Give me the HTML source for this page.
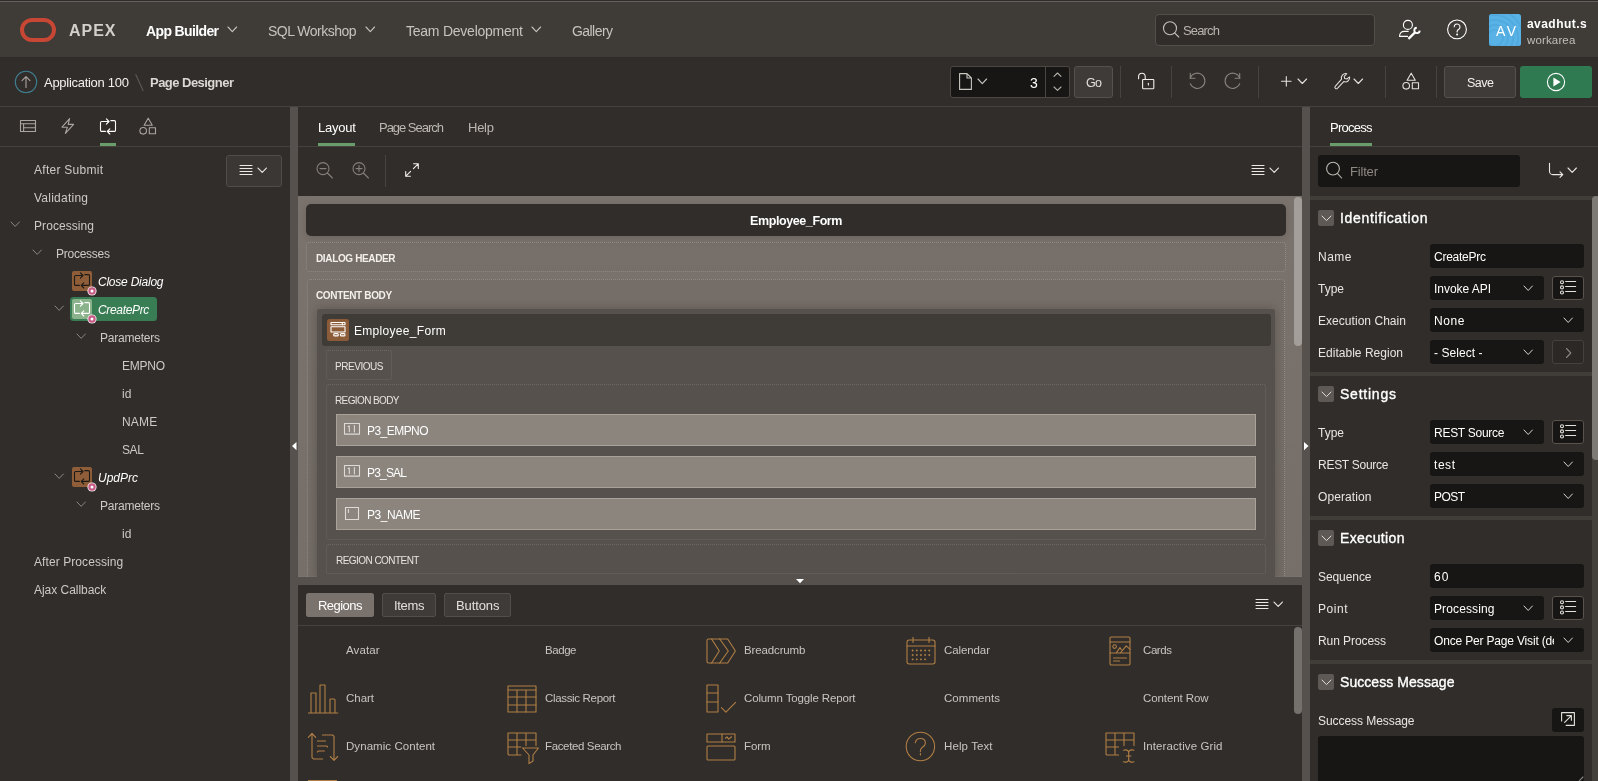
<!DOCTYPE html>
<html lang="en">
<head>
<meta charset="utf-8">
<title>Page Designer</title>
<style>
*{box-sizing:border-box;margin:0;padding:0}
html,body{width:1598px;height:781px;overflow:hidden;background:#312d2a}
body{position:relative;font-family:"Liberation Sans",sans-serif;font-size:12px;color:#d0ccc7}
.a{position:absolute}
.t{position:absolute;white-space:pre;line-height:16px;height:16px;will-change:transform}
svg{position:absolute;overflow:visible}
.s{fill:none;stroke:currentColor;stroke-width:1.1;stroke-linecap:round;stroke-linejoin:round}
.f{fill:currentColor;stroke:none}
</style>
</head>
<body>
<div class="a" style="left:0px;top:0px;width:1598px;height:1px;background:#2e2d2c;"></div>
<div class="a" style="left:0px;top:1px;width:1598px;height:1px;background:#66625f;"></div>
<div class="a" style="left:0px;top:2px;width:1598px;height:55px;background:#3f3c38;"></div>
<div class="a" style="left:20px;top:18px;width:36.2px;height:24.2px;border:4.3px solid #c74634;border-radius:12.1px;"></div>
<svg style="left:228.2px;top:27.2px;color:#c6c2bd;" width="8.6" height="4.6" viewBox="0 0 8.6 4.6"><path class="s" style="stroke-width:1.1" d="M0 0L4.3 4.6L8.6 0"/></svg>
<svg style="left:366.2px;top:27.2px;color:#c6c2bd;" width="8.6" height="4.6" viewBox="0 0 8.6 4.6"><path class="s" style="stroke-width:1.1" d="M0 0L4.3 4.6L8.6 0"/></svg>
<svg style="left:531.7px;top:27.2px;color:#c6c2bd;" width="8.6" height="4.6" viewBox="0 0 8.6 4.6"><path class="s" style="stroke-width:1.1" d="M0 0L4.3 4.6L8.6 0"/></svg>
<div class="a" style="left:1155px;top:14px;width:220px;height:32px;background:#312d2a;border:1px solid #524e4a;border-radius:4px;"></div>
<svg style="left:1162px;top:20px;color:#c4c0bb;" width="18" height="18" viewBox="0 0 18 18"><circle class="s" cx="8" cy="8.2" r="6.5"/><path class="s" d="M12.6 12.8L16.8 17"/></svg>
<svg style="left:1397px;top:18px;color:#ffffff;stroke-width:1.6" width="24" height="24" viewBox="0 0 24 24"><circle class="s" cx="10.9" cy="6.9" r="4.5"/><path class="s" d="M11.2 13.4H7.1a4.5 4.5 0 0 0-4.5 4.5v.5H10.6"/><path class="s" style="stroke-width:2.3;stroke-linecap:butt" d="M11.4 20.8L18.3 14.1"/><path class="s" style="stroke-width:1.9;stroke-linecap:butt" d="M22.69 12.64A2.7 2.7 0 1 1 19.76 9.71"/></svg>
<svg style="left:1446px;top:18px;color:#ffffff;stroke-width:1.5" width="22" height="22" viewBox="0 0 22 22"><circle class="s" cx="11" cy="11.4" r="9.4"/><path class="s" d="M8.2 8.8a2.9 2.9 0 1 1 4.3 2.6c-.9.5-1.4 1-1.4 2v.6"/><circle class="f" cx="11.1" cy="16.6" r="1"/></svg>
<div class="a" style="left:1489px;top:14px;width:32px;height:32px;background:#58b2e6;border-radius:2.5px;"></div>
<svg style="left:1489px;top:14px;overflow:hidden;border-radius:2px" width="32" height="32" viewBox="0 0 32 32"><g fill="none" stroke="#4ea4d8" stroke-width="1.6" opacity=".7"><circle cx="6" cy="24" r="8"/><circle cx="6" cy="24" r="13"/><circle cx="6" cy="24" r="18"/><circle cx="6" cy="24" r="23"/><circle cx="6" cy="24" r="28"/></g></svg>
<div class="a" style="left:0px;top:57px;width:1598px;height:49px;background:#312d2a;"></div>
<div class="a" style="left:0px;top:106px;width:1598px;height:1px;background:#45413d;"></div>
<svg style="left:14px;top:70px;color:#aaa59f;" width="24" height="24" viewBox="0 0 24 24"><circle cx="12" cy="12" r="10.7" fill="none" stroke="#3f7f91" stroke-width="1.1"/><path class="s" d="M12 17.5V6.8M8 10.6L12 6.6L16 10.6"/></svg>
<svg style="left:135px;top:74px;color:#5e5a55;" width="9" height="17" viewBox="0 0 9 17"><path class="s" d="M.8.5L8 16.5"/></svg>
<div class="a" style="left:950px;top:66px;width:120px;height:32px;background:#171614;border:1px solid #4b4743;border-radius:3px;"></div>
<div class="a" style="left:1045px;top:67px;width:1px;height:30px;background:#4b4743;"></div>
<svg style="left:959px;top:73px;color:#c9c5c0;" width="13" height="17" viewBox="0 0 13 17"><path class="s" d="M.6.6H8L12.4 5V16.4H.6zM8 .6V5H12.4"/></svg>
<svg style="left:978.2px;top:79.0px;color:#c9c5c0;" width="8.6" height="4.6" viewBox="0 0 8.6 4.6"><path class="s" style="stroke-width:1.1" d="M0 0L4.3 4.6L8.6 0"/></svg>
<svg style="left:1053.7px;top:72.8px;color:#b5b0aa;" width="7" height="3.4" viewBox="0 0 7 3.4"><path class="s" d="M0 3.4L3.5 0L7 3.4"/></svg>
<svg style="left:1053.7px;top:87.4px;color:#b5b0aa;" width="7" height="3.4" viewBox="0 0 7 3.4"><path class="s" d="M0 0L3.5 3.4L7 0"/></svg>
<div class="a" style="left:1074px;top:66px;width:38.5px;height:32px;background:#3f3b38;border:1px solid #56514d;border-radius:3px;"></div>
<div class="a" style="left:1120px;top:66px;width:1px;height:32px;background:#47433f;"></div>
<div class="a" style="left:1171px;top:66px;width:1px;height:32px;background:#47433f;"></div>
<div class="a" style="left:1258px;top:66px;width:1px;height:32px;background:#47433f;"></div>
<div class="a" style="left:1385px;top:66px;width:1px;height:32px;background:#47433f;"></div>
<div class="a" style="left:1436px;top:66px;width:1px;height:32px;background:#47433f;"></div>
<svg style="left:1137px;top:72px;color:#f3f0ec;stroke-width:1.25" width="18" height="19" viewBox="0 0 18 19"><rect class="s" x="5.6" y="7.5" width="11.2" height="9.2" rx=".6"/><path class="s" d="M8.2 7.4V4.6a3.3 3.3 0 0 0-6.6 0V6.8"/><path class="s" d="M11.4 11.2v1.8"/></svg>
<svg style="left:1188px;top:72px;color:#87827c;" width="18" height="18" viewBox="0 0 18 18"><path class="s" d="M2.16 6.2A7.6 7.6 0 1 1 2.25 11.65"/><path class="s" d="M2.3 1.4V6.2H6.9"/></svg>
<svg style="left:1224.1px;top:72px;color:#87827c;" width="18" height="18" viewBox="0 0 18 18"><path class="s" d="M15.84 6.2A7.6 7.6 0 1 0 15.75 11.65"/><path class="s" d="M15.7 1.4V6.2H11.1"/></svg>
<svg style="left:1280.7px;top:76px;color:#e4e0dc;stroke-width:1.3" width="10.6" height="10.6" viewBox="0 0 10.6 10.6"><path class="s" d="M5.3 .5V10.1M.5 5.3H10.1"/></svg>
<svg style="left:1298.3px;top:79.25px;color:#e4e0dc;" width="8.6" height="4.5" viewBox="0 0 8.6 4.5"><path class="s" style="stroke-width:1.1" d="M0 0L4.3 4.5L8.6 0"/></svg>
<svg style="left:1334px;top:72px;color:#e4e0dc;" width="17" height="18" viewBox="0 0 18 19"><path class="s" d="M16.6 5.2a4.6 4.6 0 0 1-6.3 4.9L3.6 17.3a1.6 1.6 0 0 1-2.3-2.2L8 7.6a4.6 4.6 0 0 1 5.6-5.8L10.8 4.6l.5 2.3 2.3.5z"/></svg>
<svg style="left:1354.3px;top:79.25px;color:#e4e0dc;" width="8.6" height="4.5" viewBox="0 0 8.6 4.5"><path class="s" style="stroke-width:1.1" d="M0 0L4.3 4.5L8.6 0"/></svg>
<svg style="left:1402px;top:71.9px;color:#e4e0dc;" width="18" height="18" viewBox="0 0 18 18"><path class="s" d="M9.2 1.2L13.3 8.2H5.1z"/><circle class="s" cx="4.2" cy="13.8" r="3.3"/><rect class="s" x="10.3" y="10.8" width="6.2" height="6"/></svg>
<div class="a" style="left:1444px;top:66px;width:72px;height:32px;background:#3f3b38;border:1px solid #56514d;border-radius:3px;"></div>
<div class="a" style="left:1520px;top:66px;width:72px;height:32px;background:#2f7a51;border-radius:3px;"></div>
<svg style="left:1546px;top:72px;color:#ffffff;stroke-width:1.3" width="20" height="20" viewBox="0 0 20 20"><circle class="s" cx="10" cy="10" r="8.6"/><path class="f" d="M7.4 5.6L14.6 10L7.4 14.4z"/></svg>
<div class="a" style="left:290px;top:107px;width:8px;height:674px;background:#56514c;"></div>
<div class="a" style="left:1302px;top:107px;width:8px;height:674px;background:#56514c;"></div>
<div class="a" style="left:0px;top:146px;width:290px;height:1px;background:#45413d;"></div>
<div class="a" style="left:298px;top:146px;width:1004px;height:1px;background:#45413d;"></div>
<div class="a" style="left:1310px;top:146px;width:288px;height:1px;background:#45413d;"></div>
<svg style="left:291.8px;top:442px;color:#ffffff;" width="4.5" height="8.2" viewBox="0 0 4.5 8.2"><path class="f" d="M4.5 0V8.2L0 4.1z"/></svg>
<svg style="left:1303.7px;top:442px;color:#ffffff;" width="4.5" height="8.2" viewBox="0 0 4.5 8.2"><path class="f" d="M0 0V8.2L4.5 4.1z"/></svg>
<svg style="left:20px;top:120px;color:#aaa59f;" width="16" height="12" viewBox="0 0 16 12"><rect class="s" x=".5" y=".5" width="15" height="11"/><path class="s" d="M.5 3.7H15.5M3.6 3.7V11.5M3.6 7.8H15.5"/></svg>
<svg style="left:61px;top:118px;color:#aaa59f;" width="14" height="16" viewBox="0 0 14 16"><path class="s" d="M8.6 .6L1 9.2H6.4L4.4 15.4L12.6 6.4H7.2z"/></svg>
<svg style="left:98px;top:116.5px;color:#ffffff;stroke-width:1.2" width="20" height="20" viewBox="0 0 20 20"><path class="s" d="M8.4 1.9L11 4.5L8.4 7.1M10.6 4.5H3.7a1.2 1.2 0 0 0-1.2 1.2V13.2a1.2 1.2 0 0 0 1.2 1.2H7.4"/><path class="s" d="M12.8 3.6H16.3a1.2 1.2 0 0 1 1.2 1.2V13.2a1.2 1.2 0 0 1-1.2 1.2H9.6M11.8 11.8L9.2 14.4L11.8 17"/></svg>
<svg style="left:139px;top:117px;color:#aaa59f;" width="18" height="18" viewBox="0 0 18 18"><path class="s" d="M9.2 1.2L13.3 8.2H5.1z"/><circle class="s" cx="4.2" cy="13.8" r="3.3"/><rect class="s" x="10.3" y="10.8" width="6.2" height="6"/></svg>
<div class="a" style="left:100px;top:143px;width:16px;height:3px;background:#699d6c;"></div>
<div class="a" style="left:226px;top:155px;width:56px;height:32px;background:#3b3734;border:1px solid #504c48;border-radius:3px;"></div>
<svg style="left:240px;top:165.0px;color:#ece8e4;stroke-width:1;stroke-linecap:butt" width="12" height="11" viewBox="0 0 12 11"><path class="s" d="M0 .5H12M0 3.5H12M0 6.5H12M0 9.5H12"/></svg>
<svg style="left:258.1px;top:168.25px;color:#ece8e4;" width="8.4" height="4.5" viewBox="0 0 8.4 4.5"><path class="s" style="stroke-width:1.1" d="M0 0L4.2 4.5L8.4 0"/></svg>
<svg style="left:11.399999999999999px;top:222.3px;color:#8d8882;" width="8.4" height="4.4" viewBox="0 0 8.4 4.4"><path class="s" style="stroke-width:1" d="M0 0L4.2 4.4L8.4 0"/></svg>
<svg style="left:32.9px;top:250.3px;color:#8d8882;" width="8.4" height="4.4" viewBox="0 0 8.4 4.4"><path class="s" style="stroke-width:1" d="M0 0L4.2 4.4L8.4 0"/></svg>
<div class="a" style="left:72px;top:271px;width:20px;height:20px;background:#8f5e38;border-radius:2px;"></div>
<svg style="left:72px;top:271.3px;color:#1d1a18;stroke-width:1.2" width="20" height="20" viewBox="0 0 20 20"><path class="s" d="M8.4 1.9L11 4.5L8.4 7.1M10.6 4.5H3.7a1.2 1.2 0 0 0-1.2 1.2V13.2a1.2 1.2 0 0 0 1.2 1.2H7.4"/><path class="s" d="M12.8 3.6H16.3a1.2 1.2 0 0 1 1.2 1.2V13.2a1.2 1.2 0 0 1-1.2 1.2H9.6M11.8 11.8L9.2 14.4L11.8 17"/></svg>
<svg style="left:86.5px;top:285.5px" width="10" height="10" viewBox="0 0 10 10"><circle cx="5" cy="5" r="4.6" fill="#f7eef2"/><circle cx="5" cy="5" r="3.7" fill="#c65b85"/><circle cx="5" cy="5" r="1.5" fill="#fff"/></svg>
<div class="a" style="left:70px;top:297px;width:87px;height:24px;background:#397d54;border-radius:3.5px;"></div>
<div class="a" style="left:72px;top:299px;width:20px;height:20px;background:#8ab38b;border-radius:2px;"></div>
<svg style="left:72px;top:299.3px;color:#ffffff;stroke-width:1.2" width="20" height="20" viewBox="0 0 20 20"><path class="s" d="M8.4 1.9L11 4.5L8.4 7.1M10.6 4.5H3.7a1.2 1.2 0 0 0-1.2 1.2V13.2a1.2 1.2 0 0 0 1.2 1.2H7.4"/><path class="s" d="M12.8 3.6H16.3a1.2 1.2 0 0 1 1.2 1.2V13.2a1.2 1.2 0 0 1-1.2 1.2H9.6M11.8 11.8L9.2 14.4L11.8 17"/></svg>
<svg style="left:86.5px;top:313.5px" width="10" height="10" viewBox="0 0 10 10"><circle cx="5" cy="5" r="4.6" fill="#f7eef2"/><circle cx="5" cy="5" r="3.7" fill="#c65b85"/><circle cx="5" cy="5" r="1.5" fill="#fff"/></svg>
<svg style="left:55.4px;top:306.3px;color:#8d8882;" width="8.4" height="4.4" viewBox="0 0 8.4 4.4"><path class="s" style="stroke-width:1" d="M0 0L4.2 4.4L8.4 0"/></svg>
<svg style="left:77.39999999999999px;top:334.3px;color:#8d8882;" width="8.4" height="4.4" viewBox="0 0 8.4 4.4"><path class="s" style="stroke-width:1" d="M0 0L4.2 4.4L8.4 0"/></svg>
<div class="a" style="left:72px;top:467px;width:20px;height:20px;background:#8f5e38;border-radius:2px;"></div>
<svg style="left:72px;top:467.3px;color:#1d1a18;stroke-width:1.2" width="20" height="20" viewBox="0 0 20 20"><path class="s" d="M8.4 1.9L11 4.5L8.4 7.1M10.6 4.5H3.7a1.2 1.2 0 0 0-1.2 1.2V13.2a1.2 1.2 0 0 0 1.2 1.2H7.4"/><path class="s" d="M12.8 3.6H16.3a1.2 1.2 0 0 1 1.2 1.2V13.2a1.2 1.2 0 0 1-1.2 1.2H9.6M11.8 11.8L9.2 14.4L11.8 17"/></svg>
<svg style="left:86.5px;top:481.5px" width="10" height="10" viewBox="0 0 10 10"><circle cx="5" cy="5" r="4.6" fill="#f7eef2"/><circle cx="5" cy="5" r="3.7" fill="#c65b85"/><circle cx="5" cy="5" r="1.5" fill="#fff"/></svg>
<svg style="left:55.4px;top:474.3px;color:#8d8882;" width="8.4" height="4.4" viewBox="0 0 8.4 4.4"><path class="s" style="stroke-width:1" d="M0 0L4.2 4.4L8.4 0"/></svg>
<svg style="left:77.39999999999999px;top:502.3px;color:#8d8882;" width="8.4" height="4.4" viewBox="0 0 8.4 4.4"><path class="s" style="stroke-width:1" d="M0 0L4.2 4.4L8.4 0"/></svg>
<div class="a" style="left:318px;top:143px;width:37px;height:3px;background:#699d6c;"></div>
<svg style="left:315.6px;top:162.4px;color:#857f79;stroke-width:1" width="17" height="17" viewBox="0 0 17 17"><circle class="s" cx="7" cy="6.6" r="6"/><path class="s" d="M11.4 11L16.4 16M4 6.6H10"/></svg>
<svg style="left:351.6px;top:162.4px;color:#857f79;stroke-width:1" width="17" height="17" viewBox="0 0 17 17"><circle class="s" cx="7" cy="6.6" r="6"/><path class="s" d="M11.4 11L16.4 16M4 6.6H10"/><path class="s" d="M7 3.6V9.6"/></svg>
<div class="a" style="left:385px;top:155px;width:1px;height:32px;background:#47433f;"></div>
<svg style="left:404.5px;top:163px;color:#f3f0ec;stroke-width:1.3" width="14" height="14" viewBox="0 0 14 14"><path class="s" d="M8.6 .7H13.3V5.4M13.2 .8L8.4 5.6M5.4 13.3H.7V8.6M.8 13.2L5.6 8.4"/></svg>
<svg style="left:1252px;top:165.0px;color:#ece8e4;stroke-width:1;stroke-linecap:butt" width="12" height="11" viewBox="0 0 12 11"><path class="s" d="M0 .5H12M0 3.5H12M0 6.5H12M0 9.5H12"/></svg>
<svg style="left:1270.3px;top:168.25px;color:#ece8e4;" width="8.4" height="4.5" viewBox="0 0 8.4 4.5"><path class="s" style="stroke-width:1.1" d="M0 0L4.2 4.5L8.4 0"/></svg>
<div class="a" style="left:298px;top:196px;width:1004px;height:381px;background:#7a726c;"></div>
<div class="a" style="left:298px;top:196px;width:1004px;height:380px;background:linear-gradient(180deg,rgba(0,0,0,0) 0,rgba(0,0,0,.03) 100%);"></div>
<div class="a" style="left:306px;top:204px;width:980px;height:32px;background:#312d2a;border-radius:5px;box-shadow:0 2px 9px rgba(0,0,0,.13);"></div>
<div class="a" style="left:1294px;top:197px;width:8px;height:149px;background:#a39e99;border-radius:4px;"></div>
<div class="a" style="left:306px;top:242px;width:980px;height:30px;background:rgba(0,0,0,.025);border:1px dotted #928b85;border-radius:4px;"></div>
<div class="a" style="left:307px;top:279px;width:978px;height:310px;background:rgba(0,0,0,.03);border:1px dotted #928b85;border-radius:4px;"></div>
<div class="a" style="left:317px;top:309px;width:958px;height:270px;background:#56514c;border-radius:3px;box-shadow:0 0 10px rgba(0,0,0,.22);"></div>
<div class="a" style="left:322px;top:314px;width:949px;height:32px;background:#3f3b37;border-radius:3px;"></div>
<div class="a" style="left:327px;top:319px;width:22px;height:22px;background:#8c5b38;border-radius:2.5px;"></div>
<svg style="left:330px;top:322px;color:#ffffff;stroke-width:1.2" width="16" height="16" viewBox="0 0 16 16"><rect class="s" x="1" y=".5" width="14" height="2.3"/><path class="s" d="M12.3 .5V2.8"/><rect class="s" x="1" y="4.7" width="14" height="5.3"/><rect class="s" x="3.7" y="11.6" width="4.6" height="2.3" rx="1"/><rect class="s" x="10.4" y="11.6" width="4.6" height="2.3" rx="1"/></svg>
<div class="a" style="left:326px;top:350px;width:66px;height:30px;border:1px dotted #6c6761;border-radius:2px;"></div>
<div class="a" style="left:326px;top:384px;width:940px;height:156px;border:1px dotted #6c6761;border-radius:2px;"></div>
<div class="a" style="left:336px;top:414px;width:920px;height:32px;background:#8b857e;border:1px solid #a8a29b;"></div>
<svg style="left:344px;top:423px;color:#dedad5;stroke-width:.9" width="16" height="12" viewBox="0 0 16 12"><rect class="s" x=".5" y=".5" width="15" height="10.6"/><path class="s" d="M4.2 3.6L5.3 3.1V8.6M10.4 2.6V9"/></svg>
<div class="a" style="left:336px;top:456px;width:920px;height:32px;background:#8b857e;border:1px solid #a8a29b;"></div>
<svg style="left:344px;top:465px;color:#dedad5;stroke-width:.9" width="16" height="12" viewBox="0 0 16 12"><rect class="s" x=".5" y=".5" width="15" height="10.6"/><path class="s" d="M4.2 3.6L5.3 3.1V8.6M10.4 2.6V9"/></svg>
<div class="a" style="left:336px;top:498px;width:920px;height:32px;background:#8b857e;border:1px solid #a8a29b;"></div>
<svg style="left:344.5px;top:506.5px;color:#dedad5;stroke-width:.9" width="14" height="13" viewBox="0 0 14 13"><rect class="s" x=".5" y=".5" width="13" height="12"/><path class="s" d="M3.4 2.6V5.4"/></svg>
<div class="a" style="left:326px;top:544px;width:940px;height:30px;border:1px dotted #6c6761;border-radius:2px;"></div>
<div class="a" style="left:298px;top:577px;width:1004px;height:8px;background:#56514c;"></div>
<svg style="left:796px;top:579px;color:#ffffff;" width="8" height="4.2" viewBox="0 0 8 4.2"><path class="f" d="M0 0H8L4 4.2z"/></svg>
<div class="a" style="left:290px;top:107px;width:8px;height:674px;background:#56514c;"></div>
<div class="a" style="left:1302px;top:107px;width:8px;height:674px;background:#56514c;"></div>
<svg style="left:291.8px;top:442px;color:#ffffff;" width="4.5" height="8.2" viewBox="0 0 4.5 8.2"><path class="f" d="M4.5 0V8.2L0 4.1z"/></svg>
<svg style="left:1303.7px;top:442px;color:#ffffff;" width="4.5" height="8.2" viewBox="0 0 4.5 8.2"><path class="f" d="M0 0V8.2L4.5 4.1z"/></svg>
<div class="a" style="left:298px;top:585px;width:1004px;height:196px;background:#312d2a;"></div>
<div class="a" style="left:306px;top:593px;width:68px;height:24px;background:#7a726c;border-radius:2.5px;"></div>
<div class="a" style="left:382px;top:593px;width:54px;height:24px;background:#3f3b38;border:1px solid #524e4a;border-radius:2px;"></div>
<div class="a" style="left:444px;top:593px;width:67px;height:24px;background:#3f3b38;border:1px solid #524e4a;border-radius:2px;"></div>
<svg style="left:1256px;top:599.0px;color:#ece8e4;stroke-width:1;stroke-linecap:butt" width="12" height="11" viewBox="0 0 12 11"><path class="s" d="M0 .5H12M0 3.5H12M0 6.5H12M0 9.5H12"/></svg>
<svg style="left:1274.3999999999999px;top:602.25px;color:#ece8e4;" width="8.4" height="4.5" viewBox="0 0 8.4 4.5"><path class="s" style="stroke-width:1.1" d="M0 0L4.2 4.5L8.4 0"/></svg>
<div class="a" style="left:298px;top:625px;width:1004px;height:1px;background:#45413d;"></div>
<div class="a" style="left:1294px;top:626.5px;width:7.6px;height:87px;background:#74706c;border-radius:4px;"></div>
<div class="a" style="left:1330px;top:143px;width:42px;height:3px;background:#699d6c;"></div>
<div class="a" style="left:1318px;top:155px;width:202px;height:32px;background:#171614;border-radius:3px;"></div>
<svg style="left:1325px;top:161px;color:#bdb8b2;" width="17" height="18" viewBox="0 0 17 18"><circle class="s" cx="8" cy="7.6" r="6.4"/><path class="s" d="M12.6 12.6L16.6 17"/></svg>
<svg style="left:1548px;top:163px;color:#ece8e4;stroke-width:1.2" width="16" height="15" viewBox="0 0 16 15"><path class="s" d="M1.5 .3V8.2a3.4 3.4 0 0 0 3.4 3.4H14.6M12 8.8L14.8 11.6L12 14.4"/></svg>
<svg style="left:1568.3999999999999px;top:168.3px;color:#ece8e4;" width="8.4" height="4.4" viewBox="0 0 8.4 4.4"><path class="s" style="stroke-width:1.1" d="M0 0L4.2 4.4L8.4 0"/></svg>
<div class="a" style="left:1310px;top:196px;width:282px;height:4px;background:#403c38;"></div>
<div class="a" style="left:1592px;top:196px;width:6px;height:585px;background:#433f3b;"></div>
<div class="a" style="left:1592px;top:196px;width:8px;height:264px;background:#7d7a75;border-radius:4px;"></div>
<div class="a" style="left:1318px;top:210px;width:16px;height:16px;background:#5e5955;border-radius:2px;"></div>
<svg style="left:1321.5px;top:215.7px;color:#e0dcd7;" width="9" height="4.6" viewBox="0 0 9 4.6"><path class="s" style="stroke-width:1" d="M0 0L4.5 4.6L9 0"/></svg>
<div class="a" style="left:1430px;top:244.0px;width:154px;height:24px;background:#171614;border-radius:3px;"></div>
<div class="a" style="left:1430px;top:276.0px;width:114px;height:24px;background:#171614;border-radius:3px;"></div>
<svg style="left:1523.8px;top:285.85px;color:#d6d2cd;" width="8.4" height="4.5" viewBox="0 0 8.4 4.5"><path class="s" style="stroke-width:1" d="M0 0L4.2 4.5L8.4 0"/></svg>
<div class="a" style="left:1552px;top:276.0px;width:32px;height:24px;background:#171614;border:1px solid #5a534c;border-radius:3px;"></div>
<svg style="left:1560px;top:280.0px;color:#e4e0dc;stroke-width:1" width="17" height="14" viewBox="0 0 17 14"><circle class="s" cx="2" cy="2.3" r="1.5"/><circle class="s" cx="2" cy="7.4" r="1.5"/><circle class="s" cx="2" cy="12.5" r="1.5"/><path class="s" style="stroke-linecap:butt" d="M5.2 1.5H16.1M5.2 6.5H16.1M5.2 11.5H16.1"/></svg>
<div class="a" style="left:1430px;top:308.0px;width:154px;height:24px;background:#171614;border-radius:3px;"></div>
<svg style="left:1563.8px;top:317.85px;color:#d6d2cd;" width="8.4" height="4.5" viewBox="0 0 8.4 4.5"><path class="s" style="stroke-width:1" d="M0 0L4.2 4.5L8.4 0"/></svg>
<div class="a" style="left:1430px;top:340.0px;width:114px;height:24px;background:#171614;border-radius:3px;"></div>
<svg style="left:1523.8px;top:349.85px;color:#d6d2cd;" width="8.4" height="4.5" viewBox="0 0 8.4 4.5"><path class="s" style="stroke-width:1" d="M0 0L4.2 4.5L8.4 0"/></svg>
<div class="a" style="left:1552px;top:340px;width:32px;height:24px;background:#2b2825;border:1px solid #45413d;border-radius:3px;"></div>
<svg style="left:1565.5px;top:347.5px;color:#8d8882;" width="5" height="10" viewBox="0 0 5 10"><path class="s" d="M.5 .5L4.8 5L.5 9.5"/></svg>
<div class="a" style="left:1310px;top:372px;width:282px;height:4px;background:#403c38;"></div>
<div class="a" style="left:1318px;top:386px;width:16px;height:16px;background:#5e5955;border-radius:2px;"></div>
<svg style="left:1321.5px;top:391.7px;color:#e0dcd7;" width="9" height="4.6" viewBox="0 0 9 4.6"><path class="s" style="stroke-width:1" d="M0 0L4.5 4.6L9 0"/></svg>
<div class="a" style="left:1430px;top:420.0px;width:114px;height:24px;background:#171614;border-radius:3px;"></div>
<svg style="left:1523.8px;top:429.85px;color:#d6d2cd;" width="8.4" height="4.5" viewBox="0 0 8.4 4.5"><path class="s" style="stroke-width:1" d="M0 0L4.2 4.5L8.4 0"/></svg>
<div class="a" style="left:1552px;top:420.0px;width:32px;height:24px;background:#171614;border:1px solid #5a534c;border-radius:3px;"></div>
<svg style="left:1560px;top:424.0px;color:#e4e0dc;stroke-width:1" width="17" height="14" viewBox="0 0 17 14"><circle class="s" cx="2" cy="2.3" r="1.5"/><circle class="s" cx="2" cy="7.4" r="1.5"/><circle class="s" cx="2" cy="12.5" r="1.5"/><path class="s" style="stroke-linecap:butt" d="M5.2 1.5H16.1M5.2 6.5H16.1M5.2 11.5H16.1"/></svg>
<div class="a" style="left:1430px;top:452.0px;width:154px;height:24px;background:#171614;border-radius:3px;"></div>
<svg style="left:1563.8px;top:461.85px;color:#d6d2cd;" width="8.4" height="4.5" viewBox="0 0 8.4 4.5"><path class="s" style="stroke-width:1" d="M0 0L4.2 4.5L8.4 0"/></svg>
<div class="a" style="left:1430px;top:484.0px;width:154px;height:24px;background:#171614;border-radius:3px;"></div>
<svg style="left:1563.8px;top:493.85px;color:#d6d2cd;" width="8.4" height="4.5" viewBox="0 0 8.4 4.5"><path class="s" style="stroke-width:1" d="M0 0L4.2 4.5L8.4 0"/></svg>
<div class="a" style="left:1310px;top:516px;width:282px;height:4px;background:#403c38;"></div>
<div class="a" style="left:1318px;top:530px;width:16px;height:16px;background:#5e5955;border-radius:2px;"></div>
<svg style="left:1321.5px;top:535.7px;color:#e0dcd7;" width="9" height="4.6" viewBox="0 0 9 4.6"><path class="s" style="stroke-width:1" d="M0 0L4.5 4.6L9 0"/></svg>
<div class="a" style="left:1430px;top:564.0px;width:154px;height:24px;background:#171614;border-radius:3px;"></div>
<div class="a" style="left:1430px;top:596.0px;width:114px;height:24px;background:#171614;border-radius:3px;"></div>
<svg style="left:1523.8px;top:605.85px;color:#d6d2cd;" width="8.4" height="4.5" viewBox="0 0 8.4 4.5"><path class="s" style="stroke-width:1" d="M0 0L4.2 4.5L8.4 0"/></svg>
<div class="a" style="left:1552px;top:596.0px;width:32px;height:24px;background:#171614;border:1px solid #5a534c;border-radius:3px;"></div>
<svg style="left:1560px;top:600.0px;color:#e4e0dc;stroke-width:1" width="17" height="14" viewBox="0 0 17 14"><circle class="s" cx="2" cy="2.3" r="1.5"/><circle class="s" cx="2" cy="7.4" r="1.5"/><circle class="s" cx="2" cy="12.5" r="1.5"/><path class="s" style="stroke-linecap:butt" d="M5.2 1.5H16.1M5.2 6.5H16.1M5.2 11.5H16.1"/></svg>
<div class="a" style="left:1430px;top:628.0px;width:154px;height:24px;background:#171614;border-radius:3px;"></div>
<svg style="left:1563.8px;top:637.85px;color:#d6d2cd;" width="8.4" height="4.5" viewBox="0 0 8.4 4.5"><path class="s" style="stroke-width:1" d="M0 0L4.2 4.5L8.4 0"/></svg>
<div class="a" style="left:1310px;top:660px;width:282px;height:4px;background:#403c38;"></div>
<div class="a" style="left:1318px;top:674px;width:16px;height:16px;background:#5e5955;border-radius:2px;"></div>
<svg style="left:1321.5px;top:679.7px;color:#e0dcd7;" width="9" height="4.6" viewBox="0 0 9 4.6"><path class="s" style="stroke-width:1" d="M0 0L4.5 4.6L9 0"/></svg>
<div class="a" style="left:1552px;top:708px;width:32px;height:24px;background:#171614;border-radius:3px;"></div>
<svg style="left:1561px;top:712px;color:#e4e0dc;stroke-width:1.1" width="14" height="14" viewBox="0 0 14 14"><path class="s" d="M.6 9V.6H13.4V13.4H5.2"/><path class="s" d="M3.6 10.4L10.2 3.8M5.8 3.6H10.4V8.2"/></svg>
<div class="a" style="left:1318px;top:736px;width:266px;height:50px;background:#171614;border-radius:3px;"></div>
<svg style="left:1579px;top:777px;color:#8a857f;stroke-width:.8" width="4" height="4" viewBox="0 0 4 4"><path class="s" d="M4 0L.4 3.6"/></svg>
<svg style="left:706.5px;top:638.5px;color:#b07f45;stroke-width:1;stroke-linecap:butt;stroke-linejoin:miter" width="30" height="30" viewBox="0 0 30 30"><path class="s" d="M1.5 0H20.7L28.4 12L20.7 24H1.5a1.5 1.5 0 0 1-1.5-1.5V1.5a1.5 1.5 0 0 1 1.5-1.5z"/><path class="s" d="M4.6 0L12.3 12L4.6 24M12.7 0L21.3 12L12.7 24"/></svg>
<svg style="left:906.5px;top:637.5px;color:#b07f45;stroke-width:1;stroke-linecap:butt;stroke-linejoin:miter" width="30" height="30" viewBox="0 0 30 30"><rect class="s" x="0" y="2" width="28" height="24" rx="2.2"/><path class="s" d="M6 -.6V4.5M22 -.6V4.5M0 8H28"/><rect class="f" x="4.80" y="11.7" width="1.7" height="1.7" transform="rotate(45 5.65 12.549999999999999)"/><rect class="f" x="8.95" y="11.7" width="1.7" height="1.7" transform="rotate(45 9.80 12.549999999999999)"/><rect class="f" x="13.10" y="11.7" width="1.7" height="1.7" transform="rotate(45 13.95 12.549999999999999)"/><rect class="f" x="17.25" y="11.7" width="1.7" height="1.7" transform="rotate(45 18.10 12.549999999999999)"/><rect class="f" x="21.40" y="11.7" width="1.7" height="1.7" transform="rotate(45 22.25 12.549999999999999)"/><rect class="f" x="4.80" y="16.1" width="1.7" height="1.7" transform="rotate(45 5.65 16.950000000000003)"/><rect class="f" x="8.95" y="16.1" width="1.7" height="1.7" transform="rotate(45 9.80 16.950000000000003)"/><rect class="f" x="13.10" y="16.1" width="1.7" height="1.7" transform="rotate(45 13.95 16.950000000000003)"/><rect class="f" x="17.25" y="16.1" width="1.7" height="1.7" transform="rotate(45 18.10 16.950000000000003)"/><rect class="f" x="21.40" y="16.1" width="1.7" height="1.7" transform="rotate(45 22.25 16.950000000000003)"/><rect class="f" x="4.80" y="20.5" width="1.7" height="1.7" transform="rotate(45 5.65 21.35)"/><rect class="f" x="8.95" y="20.5" width="1.7" height="1.7" transform="rotate(45 9.80 21.35)"/><rect class="f" x="13.10" y="20.5" width="1.7" height="1.7" transform="rotate(45 13.95 21.35)"/><rect class="f" x="17.25" y="20.5" width="1.7" height="1.7" transform="rotate(45 18.10 21.35)"/></svg>
<svg style="left:1109.5px;top:636.5px;color:#b07f45;stroke-width:1;stroke-linecap:butt;stroke-linejoin:miter" width="30" height="30" viewBox="0 0 30 30"><rect class="s" x="0" y="0" width="20" height="28" rx="1.2"/><path class="s" d="M0 5H20M0 16H20M3.5 21H16.5M3.5 24H9.6"/><circle class="s" cx="4.6" cy="9.6" r="1.8"/><path class="s" d="M6.5 15.6L9.9 10.6L11.3 12.6M10.6 15.6L16.2 8.9L20 12.3"/></svg>
<svg style="left:308.5px;top:684.5px;color:#b07f45;stroke-width:1;stroke-linecap:butt;stroke-linejoin:miter" width="30" height="30" viewBox="0 0 30 30"><path class="s" d="M-.6 28H28.8M2 28V8H7V28M11 28V0H16V28M21 28V14H25a1 1 0 0 1 1 1V28"/></svg>
<svg style="left:507.5px;top:685.5px;color:#b07f45;stroke-width:1;stroke-linecap:butt;stroke-linejoin:miter" width="30" height="30" viewBox="0 0 30 30"><rect class="s" x="0" y="0" width="28" height="26"/><path class="s" d="M0 4H28M0 11H28M0 19H28M9 4V26M18 4V26"/></svg>
<svg style="left:706.5px;top:684.5px;color:#b07f45;stroke-width:1;stroke-linecap:butt;stroke-linejoin:miter" width="30" height="30" viewBox="0 0 30 30"><rect class="s" x="0" y="0" width="11" height="27"/><path class="s" d="M0 8H11M0 17H11M14.4 22.6L18.9 27.1L28.6 17.4"/></svg>
<svg style="left:308.5px;top:733.5px;color:#b07f45;stroke-width:1;stroke-linecap:butt;stroke-linejoin:miter" width="30" height="30" viewBox="0 0 30 30"><path class="s" d="M-.7 3.3L3 -.5L6.7 3.3M3 -.4V23.6L4.6 25H13.6"/><path class="s" d="M13.4 1H23.6L25 2.4V26.2M21.3 22.5L25 26.3L28.7 22.5"/><path class="s" d="M8.4 7H16.6M8.4 12H17.6l1 1M9.4 17l-1 1M9.4 17H15.4"/></svg>
<svg style="left:507.5px;top:732.5px;color:#b07f45;stroke-width:1;stroke-linecap:butt;stroke-linejoin:miter" width="30" height="30" viewBox="0 0 30 30"><path class="s" d="M13 22H.8L0 21.2V0H28V12.6M0 7H28M0 14H13M9 0V22M18 0V12.6"/><path class="s" d="M14.6 15H30.4L25 22V28L21 30.6V22z"/></svg>
<svg style="left:706.5px;top:733.5px;color:#b07f45;stroke-width:1;stroke-linecap:butt;stroke-linejoin:miter" width="30" height="30" viewBox="0 0 30 30"><rect class="s" x="0" y="0" width="28" height="8"/><path class="s" d="M15 0V8M18.4 4.2L20 2.9L21.7 5.1L24.6 2.8"/><rect class="s" x="0" y="12" width="28" height="14" rx="1"/></svg>
<svg style="left:906px;top:732px;color:#b07f45;stroke-width:1;stroke-linecap:butt;stroke-linejoin:miter" width="30" height="30" viewBox="0 0 30 30"><circle class="s" cx="14.4" cy="14.5" r="14.2"/><path class="s" d="M9.3 10.8C9.7 8 11.7 6.5 14.4 6.5C17.4 6.5 19.4 8.4 19.4 11C19.4 13 18 14.3 16.4 15.3C14.8 16.3 14.3 17.3 14.3 19.4M14.4 21.2V23"/></svg>
<svg style="left:1105.5px;top:732.5px;color:#b07f45;stroke-width:1;stroke-linecap:butt;stroke-linejoin:miter" width="30" height="30" viewBox="0 0 30 30"><path class="s" d="M12.6 22H.8L0 21.2V0H28V12.6M0 7H28M0 14H12.6M9 0V22M18 0V12.6"/><path class="s" d="M17.4 17.2C20 16.4 22.7 17 22.7 19.6C22.7 17 25.4 16.4 28 17.2M22.7 19.6V26.4M20.4 23H25M17.4 28.8C20 29.6 22.7 29 22.7 26.4C22.7 29 25.4 29.6 28 28.8"/></svg>
<div class="a" style="left:308px;top:780px;width:29px;height:1px;background:#b07f45;"></div>
<div class="t" style="top:23px;font-size:16px;color:#d3cfca;left:69px;font-weight:bold;letter-spacing:0.97px;">APEX</div>
<div class="t" style="top:23px;font-size:14px;color:#ffffff;left:146px;font-weight:bold;letter-spacing:-0.63px;">App Builder</div>
<div class="t" style="top:23px;font-size:14px;color:#c6c2bd;left:268px;letter-spacing:-0.51px;">SQL Workshop</div>
<div class="t" style="top:23px;font-size:14px;color:#c6c2bd;left:406px;letter-spacing:-0.24px;">Team Development</div>
<div class="t" style="top:23px;font-size:14px;color:#c6c2bd;left:572px;letter-spacing:-0.56px;">Gallery</div>
<div class="t" style="top:23px;font-size:13px;color:#bab5af;left:1183px;letter-spacing:-0.84px;">Search</div>
<div class="t" style="top:23px;font-size:14px;color:#ffffff;left:1496px;letter-spacing:2.36px;">AV</div>
<div class="t" style="top:15.5px;font-size:12px;color:#ffffff;left:1527px;font-weight:bold;letter-spacing:0.45px;">avadhut.s</div>
<div class="t" style="top:31.6px;font-size:11.5px;color:#c2beb8;left:1527px;letter-spacing:0.14px;">workarea</div>
<div class="t" style="top:75px;font-size:13px;color:#f3f0ec;left:44px;letter-spacing:-0.28px;">Application 100</div>
<div class="t" style="top:75px;font-size:13px;color:#dcd8d3;left:150px;font-weight:bold;letter-spacing:-0.53px;">Page Designer</div>
<div class="t" style="top:75px;font-size:14px;color:#ffffff;right:560px;">3</div>
<div class="t" style="top:75px;font-size:12.5px;color:#e4e0dc;left:1086px;letter-spacing:-0.69px;">Go</div>
<div class="t" style="top:75px;font-size:12.5px;color:#f3f0ec;left:1467px;letter-spacing:-0.5px;">Save</div>
<div class="t" style="top:161.5px;font-size:12px;color:#cdc9c4;left:34px;letter-spacing:0.27px;">After Submit</div>
<div class="t" style="top:189.5px;font-size:12px;color:#cdc9c4;left:34px;letter-spacing:0.24px;">Validating</div>
<div class="t" style="top:217.5px;font-size:12px;color:#cdc9c4;left:34px;letter-spacing:0.07px;">Processing</div>
<div class="t" style="top:245.5px;font-size:12px;color:#cdc9c4;left:56px;letter-spacing:-0.25px;">Processes</div>
<div class="t" style="top:273.5px;font-size:12px;color:#ffffff;left:98px;font-style:italic;letter-spacing:-0.23px;">Close Dialog</div>
<div class="t" style="top:301.5px;font-size:12px;color:#ffffff;left:98px;font-style:italic;letter-spacing:-0.34px;">CreatePrc</div>
<div class="t" style="top:329.5px;font-size:12px;color:#cdc9c4;left:100px;letter-spacing:-0.23px;">Parameters</div>
<div class="t" style="top:357.5px;font-size:12px;color:#cdc9c4;left:122px;letter-spacing:-0.25px;">EMPNO</div>
<div class="t" style="top:385.5px;font-size:12px;color:#cdc9c4;left:122px;">id</div>
<div class="t" style="top:413.5px;font-size:12px;color:#cdc9c4;left:122px;letter-spacing:0.18px;">NAME</div>
<div class="t" style="top:441.5px;font-size:12px;color:#cdc9c4;left:122px;letter-spacing:-0.44px;">SAL</div>
<div class="t" style="top:469.5px;font-size:12px;color:#ffffff;left:98px;font-style:italic;">UpdPrc</div>
<div class="t" style="top:497.5px;font-size:12px;color:#cdc9c4;left:100px;letter-spacing:-0.23px;">Parameters</div>
<div class="t" style="top:525.5px;font-size:12px;color:#cdc9c4;left:122px;">id</div>
<div class="t" style="top:553.5px;font-size:12px;color:#cdc9c4;left:34px;letter-spacing:0.08px;">After Processing</div>
<div class="t" style="top:581.5px;font-size:12px;color:#cdc9c4;left:34px;letter-spacing:-0.03px;">Ajax Callback</div>
<div class="t" style="top:120px;font-size:13px;color:#ffffff;left:318px;letter-spacing:-0.21px;">Layout</div>
<div class="t" style="top:120px;font-size:13px;color:#bcb7b1;left:379px;letter-spacing:-1.02px;">Page Search</div>
<div class="t" style="top:120px;font-size:13px;color:#bcb7b1;left:468px;letter-spacing:-0.25px;">Help</div>
<div class="t" style="top:212.5px;font-size:12.5px;color:#ffffff;left:750px;font-weight:bold;letter-spacing:-0.4px;">Employee_Form</div>
<div class="t" style="top:251.39999999999998px;font-size:10px;color:#f3f0ec;left:316px;font-weight:bold;letter-spacing:-0.36px;">DIALOG HEADER</div>
<div class="t" style="top:288.4px;font-size:10px;color:#f3f0ec;left:316px;font-weight:bold;letter-spacing:-0.35px;">CONTENT BODY</div>
<div class="t" style="top:322.8px;font-size:12px;color:#ffffff;left:354px;letter-spacing:0.31px;">Employee_Form</div>
<div class="t" style="top:359.3px;font-size:10px;color:#e8e4e0;left:335px;letter-spacing:-0.46px;">PREVIOUS</div>
<div class="t" style="top:393.3px;font-size:10px;color:#e8e4e0;left:335px;letter-spacing:-0.61px;">REGION BODY</div>
<div class="t" style="top:422.7px;font-size:12px;color:#ffffff;left:367px;letter-spacing:-0.54px;">P3_EMPNO</div>
<div class="t" style="top:464.7px;font-size:12px;color:#ffffff;left:367px;letter-spacing:-0.81px;">P3_SAL</div>
<div class="t" style="top:506.70000000000005px;font-size:12px;color:#ffffff;left:367px;letter-spacing:-0.42px;">P3_NAME</div>
<div class="t" style="top:553.3px;font-size:10px;color:#e8e4e0;left:336px;letter-spacing:-0.55px;">REGION CONTENT</div>
<div class="t" style="top:597.5px;font-size:13px;color:#ffffff;left:318px;letter-spacing:-0.53px;">Regions</div>
<div class="t" style="top:597.5px;font-size:13px;color:#e4e0dc;left:394px;letter-spacing:-0.32px;">Items</div>
<div class="t" style="top:597.5px;font-size:13px;color:#e4e0dc;left:456px;letter-spacing:-0.1px;">Buttons</div>
<div class="t" style="top:641.7px;font-size:11.5px;color:#c8c4bf;left:346px;letter-spacing:0.09px;">Avatar</div>
<div class="t" style="top:641.7px;font-size:11.5px;color:#c8c4bf;left:545px;letter-spacing:-0.44px;">Badge</div>
<div class="t" style="top:641.7px;font-size:11.5px;color:#c8c4bf;left:744px;letter-spacing:-0.13px;">Breadcrumb</div>
<div class="t" style="top:641.7px;font-size:11.5px;color:#c8c4bf;left:944px;letter-spacing:-0.1px;">Calendar</div>
<div class="t" style="top:641.7px;font-size:11.5px;color:#c8c4bf;left:1143px;letter-spacing:-0.42px;">Cards</div>
<div class="t" style="top:689.7px;font-size:11.5px;color:#c8c4bf;left:346px;letter-spacing:-0.03px;">Chart</div>
<div class="t" style="top:689.7px;font-size:11.5px;color:#c8c4bf;left:545px;letter-spacing:-0.33px;">Classic Report</div>
<div class="t" style="top:689.7px;font-size:11.5px;color:#c8c4bf;left:744px;letter-spacing:-0.14px;">Column Toggle Report</div>
<div class="t" style="top:689.7px;font-size:11.5px;color:#c8c4bf;left:944px;letter-spacing:0.06px;">Comments</div>
<div class="t" style="top:689.7px;font-size:11.5px;color:#c8c4bf;left:1143px;letter-spacing:-0.1px;">Content Row</div>
<div class="t" style="top:737.7px;font-size:11.5px;color:#c8c4bf;left:346px;letter-spacing:0.06px;">Dynamic Content</div>
<div class="t" style="top:737.7px;font-size:11.5px;color:#c8c4bf;left:545px;letter-spacing:-0.36px;">Faceted Search</div>
<div class="t" style="top:737.7px;font-size:11.5px;color:#c8c4bf;left:744px;letter-spacing:-0.11px;">Form</div>
<div class="t" style="top:737.7px;font-size:11.5px;color:#c8c4bf;left:944px;letter-spacing:0.1px;">Help Text</div>
<div class="t" style="top:737.7px;font-size:11.5px;color:#c8c4bf;left:1143px;letter-spacing:0.1px;">Interactive Grid</div>
<div class="t" style="top:120px;font-size:13px;color:#ffffff;left:1330px;letter-spacing:-0.74px;">Process</div>
<div class="t" style="top:163.5px;font-size:13px;color:#8e8983;left:1350px;letter-spacing:-0.18px;">Filter</div>
<div class="t" style="top:210.3px;font-size:14px;color:#ffffff;left:1340px;letter-spacing:0.68px;-webkit-text-stroke:.35px #fff;">Identification</div>
<div class="t" style="top:248.8px;font-size:12px;color:#e9e5e1;left:1318px;letter-spacing:0.49px;">Name</div>
<div class="t" style="top:249.0px;font-size:12px;color:#ffffff;left:1434px;letter-spacing:-0.25px;">CreatePrc</div>
<div class="t" style="top:280.8px;font-size:12px;color:#e9e5e1;left:1318px;letter-spacing:-0.01px;">Type</div>
<div class="t" style="top:281.0px;font-size:12px;color:#ffffff;left:1434px;letter-spacing:-0.04px;">Invoke API</div>
<div class="t" style="top:312.8px;font-size:12px;color:#e9e5e1;left:1318px;letter-spacing:0.04px;">Execution Chain</div>
<div class="t" style="top:313.0px;font-size:12px;color:#ffffff;left:1434px;letter-spacing:0.6px;">None</div>
<div class="t" style="top:344.8px;font-size:12px;color:#e9e5e1;left:1318px;letter-spacing:0.02px;">Editable Region</div>
<div class="t" style="top:345.0px;font-size:12px;color:#ffffff;left:1434px;letter-spacing:0.05px;">- Select -</div>
<div class="t" style="top:386.3px;font-size:14px;color:#ffffff;left:1340px;letter-spacing:0.77px;-webkit-text-stroke:.35px #fff;">Settings</div>
<div class="t" style="top:424.8px;font-size:12px;color:#e9e5e1;left:1318px;letter-spacing:-0.01px;">Type</div>
<div class="t" style="top:425.0px;font-size:12px;color:#ffffff;left:1434px;letter-spacing:-0.27px;">REST Source</div>
<div class="t" style="top:456.8px;font-size:12px;color:#e9e5e1;left:1318px;letter-spacing:-0.27px;">REST Source</div>
<div class="t" style="top:457.0px;font-size:12px;color:#ffffff;left:1434px;letter-spacing:0.55px;">test</div>
<div class="t" style="top:488.8px;font-size:12px;color:#e9e5e1;left:1318px;letter-spacing:0.1px;">Operation</div>
<div class="t" style="top:489.0px;font-size:12px;color:#ffffff;left:1434px;letter-spacing:-0.56px;">POST</div>
<div class="t" style="top:530.3px;font-size:14px;color:#ffffff;left:1340px;letter-spacing:0.38px;-webkit-text-stroke:.35px #fff;">Execution</div>
<div class="t" style="top:568.8px;font-size:12px;color:#e9e5e1;left:1318px;letter-spacing:-0.08px;">Sequence</div>
<div class="t" style="top:569.0px;font-size:12px;color:#ffffff;left:1434px;letter-spacing:1.14px;">60</div>
<div class="t" style="top:600.8px;font-size:12px;color:#e9e5e1;left:1318px;letter-spacing:0.54px;">Point</div>
<div class="t" style="top:601.0px;font-size:12px;color:#ffffff;left:1434px;letter-spacing:0.12px;">Processing</div>
<div class="t" style="top:632.8px;font-size:12px;color:#e9e5e1;left:1318px;letter-spacing:-0.07px;">Run Process</div>
<div class="t" style="top:633.0px;font-size:12px;color:#ffffff;left:1434px;letter-spacing:-0.17px;width:120.4px;overflow:hidden;">Once Per Page Visit (default)</div>
<div class="t" style="top:674.3px;font-size:14px;color:#ffffff;left:1340px;letter-spacing:0.06px;-webkit-text-stroke:.35px #fff;">Success Message</div>
<div class="t" style="top:712.8px;font-size:12px;color:#e9e5e1;left:1318px;letter-spacing:-0.06px;">Success Message</div>
</body>
</html>
